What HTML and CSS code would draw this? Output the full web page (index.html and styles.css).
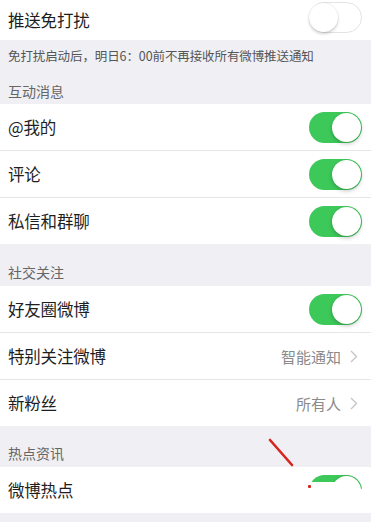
FILE: index.html
```html
<!DOCTYPE html>
<html lang="zh">
<head>
<meta charset="utf-8">
<link rel="stylesheet" href="styles.css">
</head>
<body>
<div class="page">
  <div class="row row-top">
    <span class="label">推送免打扰</span>
    <span class="switch off top-switch"><span class="knob"></span></span>
  </div>
  <div class="band band-first">
    <div class="note">免打扰启动后，明日6：00前不再接收所有微博推送通知</div>
    <div class="header">互动消息</div>
  </div>
  <div class="group">
    <div class="row"><span class="label">@我的</span><span class="switch on"><span class="knob"></span></span></div>
    <div class="row"><span class="label">评论</span><span class="switch on"><span class="knob"></span></span></div>
    <div class="row"><span class="label">私信和群聊</span><span class="switch on"><span class="knob"></span></span></div>
  </div>
  <div class="band band-mid">
    <div class="header">社交关注</div>
  </div>
  <div class="group">
    <div class="row"><span class="label">好友圈微博</span><span class="switch on"><span class="knob"></span></span></div>
    <div class="row"><span class="label">特别关注微博</span><span class="value">智能通知<svg class="chev" width="8" height="13" viewBox="0 0 8 13"><path d="M1 1l5.5 5.5L1 12" fill="none" stroke="#c4c4c8" stroke-width="1.3"/></svg></span></div>
    <div class="row"><span class="label">新粉丝</span><span class="value">所有人<svg class="chev" width="8" height="13" viewBox="0 0 8 13"><path d="M1 1l5.5 5.5L1 12" fill="none" stroke="#c4c4c8" stroke-width="1.3"/></svg></span></div>
  </div>
  <div class="band band-hot">
    <div class="header">热点资讯</div>
    <svg class="mark" width="30" height="30" viewBox="0 0 30 30"><path d="M2 2L24 27" stroke="#d9241c" stroke-width="2.6" stroke-linecap="round"/></svg>
  </div>
  <div class="group">
    <div class="row"><span class="label">微博热点</span>
      <span class="switch on hidden-switch"><span class="knob"></span><span class="erase"></span><span class="dot"></span></span>
    </div>
  </div>
  <div class="band band-end"></div>
</div>
</body>
</html>
```

FILE: styles.css
```css
* { box-sizing: border-box; }
html, body { margin: 0; padding: 0; }
body {
  background: #efeff4;
  font-family: "Noto Sans CJK SC", "Noto Sans", sans-serif;
  width: 371px;
  height: 522px;
  overflow: hidden;
}
.page { display: flex; flex-direction: column; }
.row {
  height: 47px;
  background: #fff;
  display: flex;
  align-items: center;
  justify-content: space-between;
  padding: 0 9px 0 8px;
  border-bottom: 1px solid #e6e6e8;
}
.group .row:last-child { border-bottom: none; height: 46px; }
.row-top { height: 40px; border-bottom: none; }
.top-switch { align-self: flex-start; margin-top: 2px; }
.label {
  font-size: 16.5px;
  color: #1e1e1e;
  letter-spacing: -0.2px;
}
.band { padding: 0 8px; position: relative; }
.band-first { height: 64px; padding-top: 7px; }
.note { font-size: 12.5px; line-height: 18px; color: #555; letter-spacing: -0.1px; }
.band-first .header { margin-top: 16px; }
.header { font-size: 14px; line-height: 20px; color: #666; }
.band-mid { height: 42px; padding-top: 18px; }
.band-hot { height: 41px; padding-top: 17px; }
.band-end { height: 10px; }
.switch {
  position: relative;
  width: 53px;
  height: 31px;
  border-radius: 16px;
  flex: none;
}
.switch.on { background: #3dc95a; }
.switch.off { background: #fff; border: 1.5px solid #e3e3e6; }
.knob {
  position: absolute;
  top: 1px;
  width: 29px;
  height: 29px;
  border-radius: 50%;
  background: #fff;
  box-shadow: 0 2px 4px rgba(0,0,0,0.22), 0 0 1px rgba(0,0,0,0.15);
}
.switch.on .knob { right: 1px; }
.switch.off .knob { left: -1px; top: -0.5px; box-shadow: 0 2px 3px rgba(0,0,0,0.18), 0 0 0 0.5px rgba(0,0,0,0.08); }
.value {
  display: flex;
  align-items: center;
  gap: 9px;
  font-size: 15px;
  color: #8a8a8a;
  padding-right: 4px;
}
.chev { display: block; }
.mark { position: absolute; left: 268px; top: 12px; }
.erase {
  position: absolute;
  left: -4px;
  top: 7px;
  width: 38px;
  height: 30px;
  background: #fff;
}
.hidden-switch .knob { box-shadow: 0 -1px 2px rgba(0,0,0,0.12); }
.hidden-switch::after {
  content: "";
  position: absolute;
  left: 28px;
  top: 14px;
  width: 30px;
  height: 22px;
  background: #fff;
}
.dot {
  position: absolute;
  left: -1px;
  top: 10px;
  width: 3px;
  height: 3px;
  background: #d9241c;
  border-radius: 1px;
}
```
